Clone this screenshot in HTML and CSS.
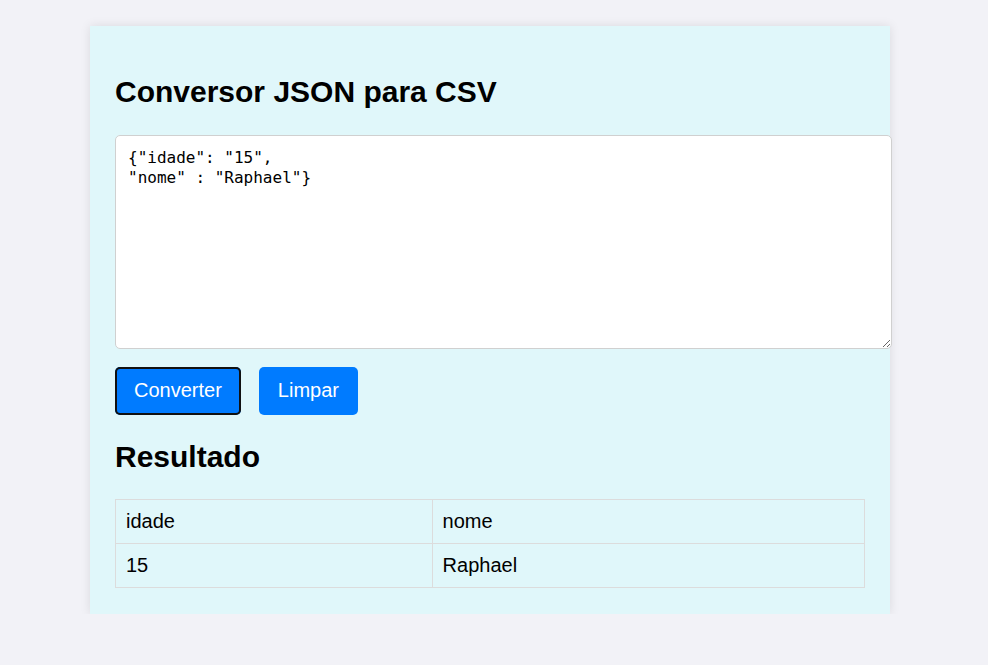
FILE: index.html
```html
<!DOCTYPE html>
<html lang="pt">
<head>
<meta charset="utf-8">
<title>Conversor JSON para CSV</title>
<link rel="stylesheet" href="styles.css">
</head>
<body>
<div class="container">
  <h1 class="title">Conversor JSON para CSV</h1>
  <textarea class="json-input">{"idade": "15",
"nome" : "Raphael"}</textarea>
  <div class="actions">
    <button class="btn btn-focused">Converter</button>
    <button class="btn">Limpar</button>
  </div>
  <h2 class="subtitle">Resultado</h2>
  <table class="result">
    <tr><td>idade</td><td>nome</td></tr>
    <tr><td>15</td><td>Raphael</td></tr>
  </table>
</div>
</body>
</html>
```
FILE: styles.css
```css
html, body {
  margin: 0;
  padding: 0;
  background: #f2f2f7;
  font-family: "Liberation Sans", Arial, sans-serif;
  color: #000;
}

.container {
  width: 800px;
  box-sizing: border-box;
  margin: 26px 0 0 90px;
  padding: 25px 25px 26px;
  background: #e0f7fa;
  box-shadow: 0 0 10px rgba(0, 0, 0, 0.1);
}

.title {
  font-size: 30px;
  font-weight: bold;
  margin: 24px 0 26px;
}

.json-input {
  display: block;
  width: calc(100% + 1px);
  height: 188px;
  padding: 12px;
  border: 1px solid #d0d0d0;
  border-radius: 5px;
  background: #fff;
  font-family: "DejaVu Sans Mono", monospace;
  font-size: 16px;
  line-height: 20px;
  color: #000;
  margin: 0;
}

.actions {
  display: flex;
  gap: 18px;
  margin-top: 18px;
}

.btn {
  font-family: "Liberation Sans", Arial, sans-serif;
  font-size: 20px;
  line-height: 23px;
  padding: 12px 19px 13px;
  border: none;
  border-radius: 5px;
  background: #007bff;
  color: #fff;
}

.btn-focused {
  box-shadow: inset 0 0 0 2px #111;
}

.subtitle {
  font-size: 30px;
  font-weight: bold;
  margin: 25px 0 25px;
}

.result {
  width: 100%;
  border-collapse: collapse;
  font-size: 20px;
}

.result td {
  border: 1px solid #dcdcdc;
  padding: 10px;
  line-height: 23px;
}
```
